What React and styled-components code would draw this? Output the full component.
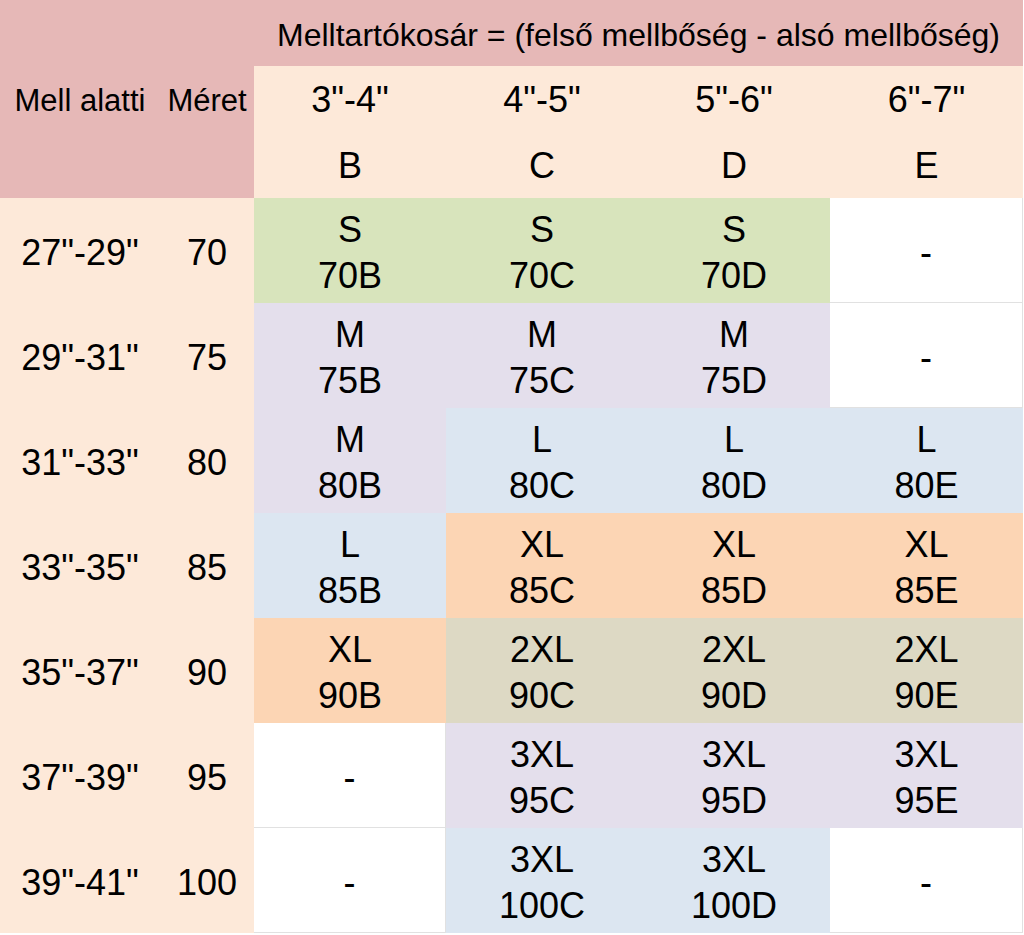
import React from "react";
import styled, { createGlobalStyle } from "styled-components";

const GlobalStyle = createGlobalStyle`
  body {
    margin: 0;
    background: #ffffff;
    font-family: "Liberation Sans", Arial, sans-serif;
    color: #000000;
  }
`;

const colors = {
  pink: "#e6b8b7",
  cream: "#fde9d9",
  green: "#d8e4bc",
  lavender: "#e4dfec",
  blue: "#dce6f1",
  orange: "#fcd5b4",
  tan: "#ddd9c4",
  white: "#ffffff",
};

const StyledTable = styled.div`
  display: grid;
  grid-template-columns: 160px 94px 192px 192px 192px 193px;
  grid-template-rows: 66px 66px 66px repeat(7, 105px);
  width: 1023px;
`;

const StyledCornerHead = styled.div`
  grid-row: 1 / span 3;
  background: ${colors.pink};
  display: flex;
  align-items: center;
  justify-content: center;
  padding-top: 4px;
  font-size: 31px;
  white-space: nowrap;
`;

const StyledTitle = styled.div`
  grid-column: 3 / span 4;
  background: ${colors.pink};
  display: flex;
  align-items: center;
  justify-content: center;
  padding-top: 4px;
  font-size: 32px;
  white-space: nowrap;
`;

const StyledCupHead = styled.div`
  background: ${colors.cream};
  display: flex;
  align-items: center;
  justify-content: center;
  padding-top: 2px;
  font-size: 36px;
`;

const StyledRowHead = styled.div`
  background: ${colors.cream};
  display: flex;
  align-items: center;
  justify-content: center;
  padding-top: 5px;
  font-size: 36px;
  white-space: nowrap;
`;

const StyledCell = styled.div`
  box-sizing: border-box;
  background: ${(p) => colors[p.$tone]};
  border-right: ${(p) => (p.$tone === "white" ? "1px solid #e1e1e1" : "none")};
  border-bottom: ${(p) => (p.$tone === "white" ? "1px solid #e1e1e1" : "none")};
  display: flex;
  flex-direction: column;
  align-items: center;
  justify-content: center;
  padding-top: 5px;
  font-size: 36px;
  line-height: 46px;
  text-align: center;
`;

const cups = [
  { range: '3"-4"', letter: "B" },
  { range: '4"-5"', letter: "C" },
  { range: '5"-6"', letter: "D" },
  { range: '6"-7"', letter: "E" },
];

const rows = [
  { under: '27"-29"', band: "70", sizes: [["S", "green"], ["S", "green"], ["S", "green"], null] },
  { under: '29"-31"', band: "75", sizes: [["M", "lavender"], ["M", "lavender"], ["M", "lavender"], null] },
  { under: '31"-33"', band: "80", sizes: [["M", "lavender"], ["L", "blue"], ["L", "blue"], ["L", "blue"]] },
  { under: '33"-35"', band: "85", sizes: [["L", "blue"], ["XL", "orange"], ["XL", "orange"], ["XL", "orange"]] },
  { under: '35"-37"', band: "90", sizes: [["XL", "orange"], ["2XL", "tan"], ["2XL", "tan"], ["2XL", "tan"]] },
  { under: '37"-39"', band: "95", sizes: [null, ["3XL", "lavender"], ["3XL", "lavender"], ["3XL", "lavender"]] },
  { under: '39"-41"', band: "100", sizes: [null, ["3XL", "blue"], ["3XL", "blue"], null] },
];

function SizeCell({ size, band, letter }) {
  if (!size) {
    return <StyledCell $tone="white">-</StyledCell>;
  }
  return (
    <StyledCell $tone={size[1]}>
      <span>{size[0]}</span>
      <span>
        {band}
        {letter}
      </span>
    </StyledCell>
  );
}

export default function App() {
  return (
    <>
      <GlobalStyle />
      <StyledTable>
        <StyledCornerHead>Mell alatti</StyledCornerHead>
        <StyledCornerHead>Méret</StyledCornerHead>
        <StyledTitle>Melltartókosár = (felső mellbőség - alsó mellbőség)</StyledTitle>
        {cups.map((c) => (
          <StyledCupHead key={c.range}>{c.range}</StyledCupHead>
        ))}
        {cups.map((c) => (
          <StyledCupHead key={c.letter}>{c.letter}</StyledCupHead>
        ))}
        {rows.map((r) => (
          <React.Fragment key={r.band}>
            <StyledRowHead>{r.under}</StyledRowHead>
            <StyledRowHead>{r.band}</StyledRowHead>
            {r.sizes.map((s, i) => (
              <SizeCell key={i} size={s} band={r.band} letter={cups[i].letter} />
            ))}
          </React.Fragment>
        ))}
      </StyledTable>
    </>
  );
}
